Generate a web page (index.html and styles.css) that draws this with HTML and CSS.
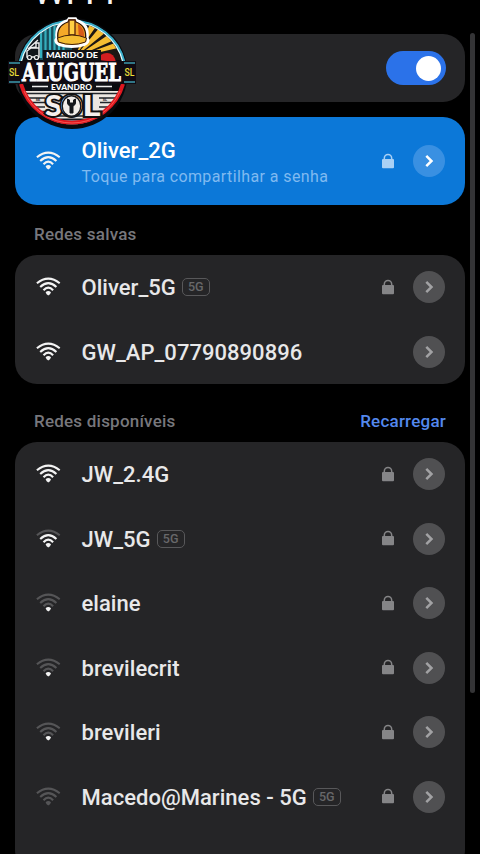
FILE: index.html
```html
<!DOCTYPE html>
<html lang="pt-BR">
<head>
<meta charset="utf-8">
<title>Wi-Fi</title>
<link rel="stylesheet" href="styles.css">
</head>
<body>
<svg class="defs" aria-hidden="true">
  <symbol id="wifi" viewBox="0 0 26 20">
    <path class="w4" d="M1.900 6.300Q13.300-3 24.700 6.300"/>
    <path class="w3" d="M5.200 9.900Q13.300 2.200 21.400 9.900"/>
    <path class="w2" d="M8.500 13.300Q13.300 7.900 18.100 13.300"/>
    <path class="w1" d="M10.600 15.200Q13.300 12.800 16 15.200Q15.300 17.500 13.300 18.500Q11.300 17.500 10.600 15.200Z"/>
  </symbol>
  <symbol id="lock" viewBox="0 0 14 16">
    <path d="M3.300 7V5.200a3.700 3.700 0 0 1 7.400 0V7" fill="none" stroke="currentColor" stroke-width="1.500"/>
    <rect x="1" y="6" width="12" height="9.300" rx="1" fill="currentColor"/>
  </symbol>
  <symbol id="chev" viewBox="0 0 32 32">
    <path d="M13.300 10.800L18.500 16l-5.200 5.200" fill="none" stroke="currentColor" stroke-width="2.500"/>
  </symbol>
</svg>
<main class="screen">
  <h1 class="title">Wi-Fi</h1>
  <section class="card power"><span class="switch"><span class="knob"></span></span></section>
  <section class="card connected row">
    <svg class="wifi s4"><use href="#wifi"/></svg>
    <div class="info"><div class="name">Oliver_2G</div><div class="hint">Toque para compartilhar a senha</div></div>
    <svg class="lock"><use href="#lock"/></svg><svg class="go"><use href="#chev"/></svg>
  </section>
  <div class="label"><span>Redes salvas</span></div>
  <section class="card">
    <div class="row"><svg class="wifi s4"><use href="#wifi"/></svg><div class="name">Oliver_5G</div><span class="tag">5G</span><svg class="lock"><use href="#lock"/></svg><svg class="go"><use href="#chev"/></svg></div>
    <div class="row"><svg class="wifi s4"><use href="#wifi"/></svg><div class="name">GW_AP_07790890896</div><svg class="go"><use href="#chev"/></svg></div>
  </section>
  <div class="label second"><span>Redes disponíveis</span><span class="reload">Recarregar</span></div>
  <section class="card available">
    <div class="row"><svg class="wifi s4"><use href="#wifi"/></svg><div class="name">JW_2.4G</div><svg class="lock"><use href="#lock"/></svg><svg class="go"><use href="#chev"/></svg></div>
    <div class="row"><svg class="wifi s3"><use href="#wifi"/></svg><div class="name">JW_5G</div><span class="tag">5G</span><svg class="lock"><use href="#lock"/></svg><svg class="go"><use href="#chev"/></svg></div>
    <div class="row"><svg class="wifi s1"><use href="#wifi"/></svg><div class="name">elaine</div><svg class="lock"><use href="#lock"/></svg><svg class="go"><use href="#chev"/></svg></div>
    <div class="row"><svg class="wifi s1"><use href="#wifi"/></svg><div class="name">brevilecrit</div><svg class="lock"><use href="#lock"/></svg><svg class="go"><use href="#chev"/></svg></div>
    <div class="row"><svg class="wifi s1"><use href="#wifi"/></svg><div class="name">brevileri</div><svg class="lock"><use href="#lock"/></svg><svg class="go"><use href="#chev"/></svg></div>
    <div class="row"><svg class="wifi s0"><use href="#wifi"/></svg><div class="name">Macedo@Marines - 5G</div><span class="tag">5G</span><svg class="lock"><use href="#lock"/></svg><svg class="go"><use href="#chev"/></svg></div>
  </section>
</main>
<div class="scrollbar"></div>
<svg class="logo" viewBox="0 0 150 140">
  <defs><clipPath id="disc"><circle cx="72" cy="73.500" r="51"/></clipPath></defs>
  <circle cx="72" cy="73.500" r="55.500" fill="#080a0e"/>
  <g clip-path="url(#disc)">
    <path d="M20 15H72V60H20Z" fill="#174c5a"/>
    <path d="M20 15H40V60H20Z" fill="#11161c"/>
    <path d="M41 25V58M45.500 20V58M50 18V58M54.500 18V58M59 18V58M63.500 18V58" stroke="#35aebd" stroke-width="2.200"/>
    <path d="M72 20H125V60H72Z" fill="#1c1713"/>
    <path d="M74 58L92 20L97 25ZM74 58L100 27L106 32ZM74 58L108 35L112 41ZM74 58L115 43L118 48Z" fill="#f5bd32"/>
    <path d="M98 60Q100 53 107 53Q114 53 116 62Z" fill="#d21e20"/>
    <path d="M20 91H124V130H20Z" fill="#ece7e2"/>
    <path d="M20 93.500H124M22 98H45M99 98H122M25 102.500H45M100 102.500H119M28 107H45M99 107H116M32 111.500H46M98 111.500H112M35 116H110" stroke="#20242a" stroke-width="1.500"/>
    <path d="M38 118.500H106V128H38Z" fill="#171a20"/>
    <path d="M50 121.500H94" stroke="#38b9c9" stroke-width="3"/>
  </g>
  <path d="M20.500 62A53 53 0 0 1 123.500 62" fill="none" stroke="#e8fbfc" stroke-width="2.600"/>
  <path d="M19.500 62A54 54 0 0 1 124.500 62" fill="none" stroke="#39aeca" stroke-width="2"/>
  <path d="M21 84A53 53 0 0 0 123 84" fill="none" stroke="#df171f" stroke-width="4"/>
  <path d="M24 91A52 52 0 0 0 120 91" fill="none" stroke="#ff7065" stroke-width=".7"/>
  <path d="M28 49l10-9M30 48l6-1v-4h3v9M27 57v-6l4-3h8v9z" fill="#11151a" stroke="#eee" stroke-width="1.400"/>
  <g fill="#11151a" stroke="#eee" stroke-width="1.200"><circle cx="29.500" cy="57.500" r="2"/><circle cx="36.500" cy="57.500" r="2"/></g>
  <path d="M57 38Q55 24 68 20.500L69 18.800H75.500L76.500 20.500Q89 24 87 38Q90 42 84 44.500Q72 48.500 59 44.500Q54 42 57 38Z" fill="#e79020" stroke="#fff" stroke-width="3"/>
  <path d="M58 39Q56 26 68 22L69 20H75L76 22Q87 26 85.500 39Q72 45 58 39Z" fill="#f5a928" stroke="#291307" stroke-width="1.300"/>
  <path d="M78 24Q85 28 84 38L79 40Z" fill="#d65a18"/>
  <path d="M69 20H75V35H69Z" fill="#ffd043" stroke="#5b260b" stroke-width="1.300"/>
  <path d="M57.500 38Q72 32 86.500 38L85.500 42Q72 47 58.500 42Z" fill="#f5bd32" stroke="#402008"/>
  <path d="M43 50H101V61H43Z" fill="#101217"/>
  <path d="M8 61H136V84H8Z" fill="#100b12"/>
  <path d="M9 63H20M124 63H135M9 82H20M124 82H135" stroke="#3b9bad" stroke-width="1.500"/>
  <path d="M32 83H112V91H32Z" fill="#101217"/>
  <path d="M32 86.500H48M96 86.500H112" stroke="#eee" stroke-width="1.300"/>
  <text x="72" y="58" class="lt small" textLength="52" lengthAdjust="spacingAndGlyphs">MARIDO DE</text>
  <text x="71.500" y="81" class="lt main" textLength="99" lengthAdjust="spacingAndGlyphs">ALUGUEL</text>
  <text x="71.500" y="89.500" class="lt evandro" textLength="41" lengthAdjust="spacingAndGlyphs">EVANDRO</text>
  <text x="14" y="76" class="lt sl" textLength="10" lengthAdjust="spacingAndGlyphs">SL</text>
  <text x="129.500" y="76" class="lt sl" textLength="10" lengthAdjust="spacingAndGlyphs">SL</text>
  <text x="38" y="100.500" class="lt tiny">SE</text><text x="105" y="100.500" class="lt tiny">SL</text>
  <text x="53.500" y="116" class="lt sol" textLength="17" lengthAdjust="spacingAndGlyphs">S</text>
  <text x="91.500" y="116" class="lt sol" textLength="18" lengthAdjust="spacingAndGlyphs">L</text>
  <text x="71.500" y="116" class="lt sol" textLength="22" lengthAdjust="spacingAndGlyphs">O</text>
  <ellipse cx="71.500" cy="106" rx="9.300" ry="10.300" fill="#f1ece8" stroke="#15171b" stroke-width="1.400"/>
  <path d="M67.500 99v4q0 2 2.500 3v7h3v-7q2.500-1 2.500-3v-4l-2 1v3h-4v-3z" fill="#15171b" stroke="#15171b"/>
</svg>
</body>
</html>
```
FILE: styles.css
```css
* { box-sizing: border-box; }
body { margin: 0; height: 854px; overflow: hidden; position: relative; background: #000; color: #e8e8e9; font-family: Roboto, "Liberation Sans", sans-serif; }
.defs { position: absolute; width: 0; height: 0; }
.screen { height: 854px; padding: 0 15px; overflow: hidden; }
.title { height: 34px; margin: -29px 0 29px; padding-left: 18px; font-size: 37px; font-weight: 400; line-height: 42px; color: #f4f4f4; }
.card { width: 450px; border-radius: 22px; background: #252527; }
.power { height: 68px; display: flex; align-items: center; justify-content: flex-end; padding-right: 19px; }
.switch { width: 60px; height: 34px; border-radius: 17px; background: #2b72e9; display: flex; justify-content: flex-end; align-items: center; padding-right: 5px; }
.knob { width: 25px; height: 25px; border-radius: 50%; background: #fff; }
.row { display: flex; align-items: center; height: 64.5px; padding: 0 20px; }
.connected { height: 88px; margin-top: 15px; background: #0c78d8; }
.wifi { width: 26px; height: 20px; margin-right: 20.5px; flex: none; fill: none; stroke-width: 2.1; --a: #f3f3f3; --b: #f3f3f3; --c: #f3f3f3; --d: #f3f3f3; }
.w4 { stroke: var(--d); }
.w3 { stroke: var(--c); }
.w2 { stroke: var(--b); }
.w1 { fill: var(--a); stroke: none; }
.s3 { --d: #555557; }
.s1 { --d: #555557; --c: #555557; --b: #555557; }
.s0 { --a: #555557; --d: #555557; --c: #555557; --b: #555557; }
.name { font-size: 22px; line-height: 28px; padding-top: 2px; font-weight: 500; white-space: nowrap; letter-spacing: .03px; }
.connected .name { color: #fff; }
.hint { font-size: 16px; line-height: 23px; color: #80baf0; white-space: nowrap; letter-spacing: .4px; }
.tag { width: 28px; height: 18px; margin-left: 6px; border: 1.5px solid #58585a; border-radius: 5px; color: #68686a; font-size: 12.5px; font-weight: 500; line-height: 16px; text-align: center; }
.lock { width: 14px; height: 16px; margin: 0 18px 1px auto; color: #858587; flex: none; }
.go { width: 32px; height: 32px; border-radius: 50%; background: #505052; color: #a2a2a4; flex: none; }
.row > .name + .go { margin-left: auto; }
.connected .lock { color: #a9d0f5; }
.connected .go { background: #3990e2; color: #fff; }
.label { height: 50px; display: flex; align-items: center; justify-content: space-between; padding: 8px 19px 0; color: #77777c; font-size: 17px; font-weight: 500; letter-spacing: .22px; }
.second { height: 58px; padding-top: 15px; }
.reload { color: #5488ee; }
.available { height: 430px; }
.scrollbar { position: absolute; top: 33px; left: 470px; width: 5px; height: 660px; border-radius: 3px; background: #343436; }
.logo { position: absolute; left: 0; top: 0; width: 150px; height: 140px; }
.lt { text-anchor: middle; font-family: Lato, sans-serif; font-weight: 900; fill: #fff; }
.small { font-size: 8px; }
.main { font-family: "DejaVu Serif", serif; font-size: 25px; font-weight: 700; stroke: #fff; stroke-width: 1; }
.evandro { font-size: 7px; }
.sl { font-size: 11px; font-family: Roboto, sans-serif; font-weight: 500; fill: #eadf38; }
.tiny { font-size: 4px; fill: #222; }
.sol { font-size: 29px; fill: #f5f0ed; stroke: #111; stroke-width: 4; paint-order: stroke; }
```
